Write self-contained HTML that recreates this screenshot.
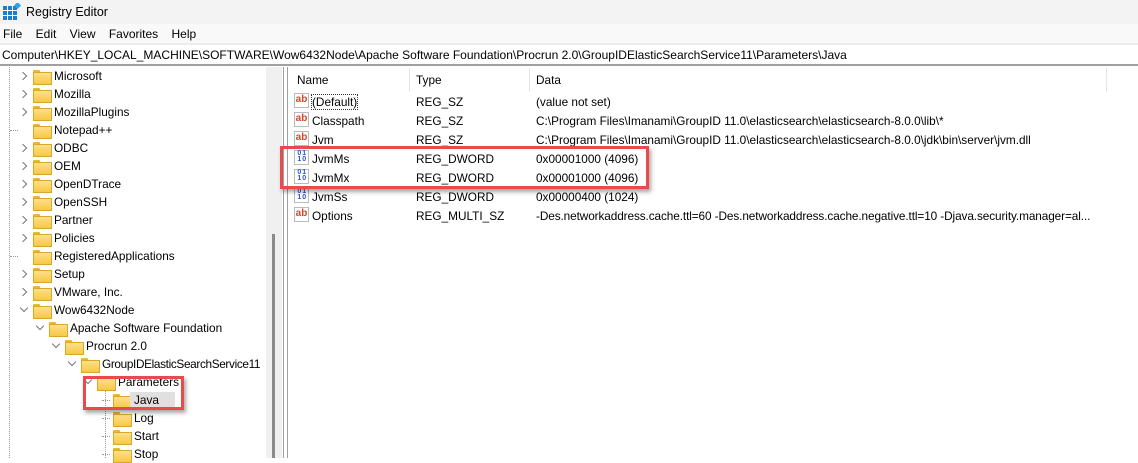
<!DOCTYPE html>
<html><head><meta charset="utf-8"><style>
*{margin:0;padding:0;box-sizing:border-box}
body{width:1138px;height:458px;overflow:hidden;background:#fff;font-family:"Liberation Sans",sans-serif;font-size:11.8px;color:#000;position:relative}
.abs{position:absolute;white-space:nowrap}
.title{left:0;top:0;width:1138px;height:24px;background:#f3f3f3}
.menu{left:0;top:24px;width:1138px;height:19px;background:#f9f9f9}
.addr{left:0;top:43px;width:1138px;height:23px;background:#fff;border-top:2px solid #ececec;border-bottom:2px solid #a0a0a0}
.fold{position:absolute;width:17px;height:13px}
.fold:before{content:"";position:absolute;left:0;top:0;width:7px;height:3px;background:#e8b736;border-radius:1px 1px 0 0}
.fold:after{content:"";position:absolute;left:0;top:2px;width:17px;height:11px;background:linear-gradient(#ffe08a,#f7c843);border:1px solid #d9a82a}
.chev{position:absolute;width:6px;height:6px;border-right:1.3px solid #777;border-bottom:1.3px solid #777}
.r{transform:rotate(-45deg)}
.d{transform:rotate(45deg)}
.dotv{position:absolute;border-left:1px dotted #999;width:0}
.doth{position:absolute;border-top:1px dotted #999;height:0;width:8px}
.ico{position:absolute;width:15px;height:15px;border:1px solid #bbb;background:#fff;font-size:10px;font-weight:bold;line-height:12px;text-align:center}
.ab{color:#d6452a}
.bin{color:#2a55d6;font-size:7px;line-height:6px;letter-spacing:-0.5px}
.red{position:absolute;border:3px solid #ea4a4e;box-shadow:2px 3px 4px rgba(0,0,0,.35)}
</style></head><body>
<div class="abs title"></div>
<svg class="abs" style="left:3px;top:3px" width="18" height="17" viewBox="0 0 18 17">
<rect x="0" y="3" width="14" height="14" fill="#1a7fd0"/>
<g stroke="#fff" stroke-width="1"><line x1="4.5" y1="3" x2="4.5" y2="17"/><line x1="9.5" y1="3" x2="9.5" y2="17"/><line x1="0" y1="7.5" x2="14" y2="7.5"/><line x1="0" y1="12.5" x2="14" y2="12.5"/></g>
<rect x="12" y="0" width="5" height="5" fill="#35a0e8" transform="rotate(45 14.5 2.5)"/></svg>
<div class="abs" style="left:26px;top:5px;font-size:12.5px">Registry Editor</div>
<div class="abs menu"></div>
<div class="abs" style="left:3px;top:27px;font-size:12px">File&nbsp;&nbsp;&nbsp;&nbsp;Edit&nbsp;&nbsp;&nbsp;&nbsp;View&nbsp;&nbsp;&nbsp;&nbsp;Favorites&nbsp;&nbsp;&nbsp;&nbsp;Help</div>
<div class="abs addr"></div>
<div class="abs" style="left:2px;top:48px;font-size:12px">Computer\HKEY_LOCAL_MACHINE\SOFTWARE\Wow6432Node\Apache Software Foundation\Procrun 2.0\GroupIDElasticSearchService11\Parameters\Java</div>

<div class="dotv" style="left:9px;top:67px;height:391px"></div>
<div id="tree"></div>
<div class="abs" style="left:266px;top:67px;width:16px;height:391px;background:#f0f0f0"></div>
<div class="abs" style="left:272px;top:234px;width:3px;height:224px;background:#8a8a8a"></div>
<div class="abs" style="left:283px;top:67px;width:1px;height:391px;background:#a0a0a0"></div>
<div class="abs" style="left:287px;top:67px;width:1px;height:391px;background:#a0a0a0"></div>

<div class="abs" style="left:297px;top:73px">Name</div>
<div class="abs" style="left:416px;top:73px">Type</div>
<div class="abs" style="left:536px;top:73px">Data</div>
<div class="abs" style="left:409px;top:68px;width:1px;height:24px;background:#e5e5e5"></div>
<div class="abs" style="left:529px;top:68px;width:1px;height:24px;background:#e5e5e5"></div>
<div class="abs" style="left:1106px;top:68px;width:1px;height:24px;background:#e5e5e5"></div>
<div id="vals"></div>

<div class="red" style="left:83px;top:376px;width:101px;height:34px"></div>
<div class="red" style="left:280px;top:146px;width:369px;height:43px"></div>

<script>
var t=[
["Microsoft",0,"r"],["Mozilla",0,"r"],["MozillaPlugins",0,"r"],["Notepad++",0,""],["ODBC",0,"r"],["OEM",0,"r"],["OpenDTrace",0,"r"],["OpenSSH",0,"r"],["Partner",0,"r"],["Policies",0,"r"],["RegisteredApplications",0,""],["Setup",0,"r"],["VMware, Inc.",0,"r"],["Wow6432Node",0,"d"],["Apache Software Foundation",1,"d"],["Procrun 2.0",2,"d"],["GroupIDElasticSearchService11",3,"d"],["Parameters",4,"d"],["Java",5,""],["Log",5,""],["Start",5,""],["Stop",5,""]];
var h="";
t.forEach(function(e,i){var y=67+i*18,x=33+e[1]*16;
if(e[2]=="r")h+='<div class="chev r" style="left:'+(x-13)+'px;top:'+(y+6)+'px"></div>';
else if(e[2]=="d")h+='<div class="chev d" style="left:'+(x-12)+'px;top:'+(y+4)+'px"></div>';
else h+='<div class="doth" style="left:'+(x-23+(e[1]==5?12:0))+'px;top:'+(y+9)+'px"></div>';
h+='<div class="fold" style="left:'+x+'px;top:'+(y+3)+'px"></div>';
if(e[0]=="Java")h+='<div class="abs" style="left:'+(x+17)+'px;top:'+(y+1)+'px;width:45px;height:16px;background:#e0e0e0"></div>';
h+='<div class="abs" style="left:'+(x+21)+'px;top:'+(y+2)+'px'+(e[1]==3?';letter-spacing:-0.35px':'')+'">'+e[0]+'</div>';});
h+='<div class="dotv" style="left:105px;top:391px;height:67px"></div>';
document.getElementById("tree").innerHTML=h;
var v=[["ab","(Default)","REG_SZ","(value not set)"],["ab","Classpath","REG_SZ","C:\\Program Files\\Imanami\\GroupID 11.0\\elasticsearch\\elasticsearch-8.0.0\\lib\\*"],["ab","Jvm","REG_SZ","C:\\Program Files\\Imanami\\GroupID 11.0\\elasticsearch\\elasticsearch-8.0.0\\jdk\\bin\\server\\jvm.dll"],["b","JvmMs","REG_DWORD","0x00001000 (4096)"],["b","JvmMx","REG_DWORD","0x00001000 (4096)"],["b","JvmSs","REG_DWORD","0x00000400 (1024)"],["ab","Options","REG_MULTI_SZ","-Des.networkaddress.cache.ttl=60 -Des.networkaddress.cache.negative.ttl=10 -Djava.security.manager=al..."]];
h="";var ys=[92,111,130,149,168,187,206];
v.forEach(function(e,i){var y=ys[i];
h+=(e[0]=="ab"?'<div class="ico ab" style="left:294px;top:'+(y+1)+'px">ab</div>':'<div class="ico bin" style="left:294px;top:'+(y+1)+'px">0 1<br>1 0</div>');
h+='<div class="abs" style="left:312px;top:'+(y+3)+'px'+(i==0?';outline:1px dotted #333':'')+'">'+e[1]+'</div>';
h+='<div class="abs" style="left:416px;top:'+(y+3)+'px">'+e[2]+'</div>';
h+='<div class="abs" style="left:536px;top:'+(y+3)+'px'+(i==6?';letter-spacing:-0.1px':'')+'">'+e[3]+'</div>';});
document.getElementById("vals").innerHTML=h;
</script>
</body></html>
